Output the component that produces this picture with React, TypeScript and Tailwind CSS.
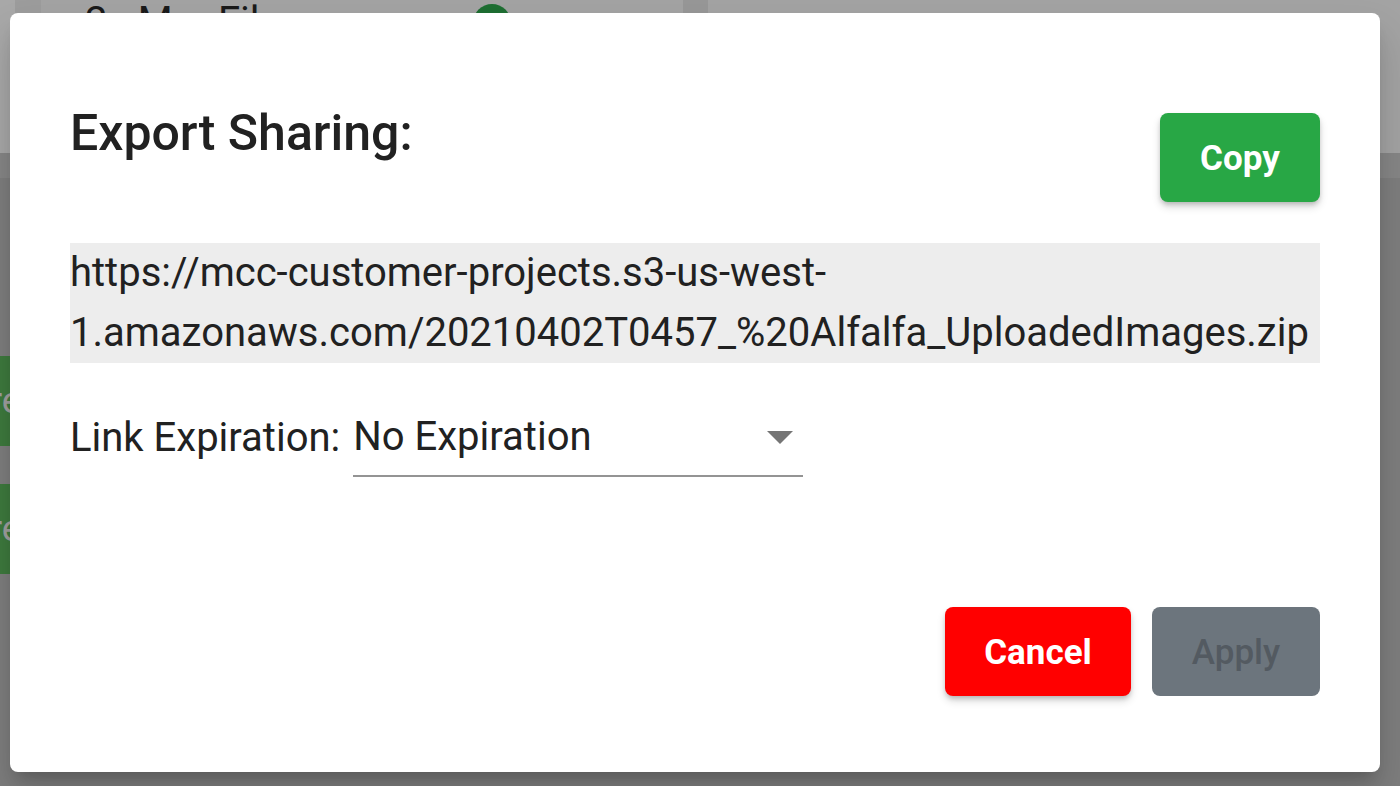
import React from 'react'

const url =
  'https://mcc-customer-projects.s3-us-west-1.amazonaws.com/20210402T0457_%20Alfalfa_UploadedImages.zip'

function DropArrow() {
  return (
    <svg width="26" height="13" viewBox="0 0 10 5" className="shrink-0">
      <path d="M0 0l5 5 5-5z" fill="#757575" />
    </svg>
  )
}

function Backdrop() {
  // the page behind the dialog, already dimmed by the overlay
  return (
    <div className="h-[786px] w-[1400px] overflow-hidden bg-[#7e7e7e]">
      <div className="flex h-[153px] bg-[#a3a3a3]">
        <div className="w-[15px] bg-[#a8a8a8]" />
        <div className="w-[26px] bg-[#9c9c9c]" />
        <div className="relative w-[642px] bg-[#a3a3a3]">
          <span className="absolute left-[44px] top-[2px] text-[40px] leading-none text-[#1a1a1a] font-['Roboto',sans-serif]">
            2 · Mar Files
          </span>
          <span className="absolute left-[432px] top-[4px] h-[38px] w-[38px] rounded-full bg-[#1e6e32]" />
        </div>
        <div className="w-[25px] bg-[#979797]" />
        <div className="flex-1 bg-[#a3a3a3]" />
      </div>
      <div className="h-[25px] bg-[#868686]" />
      <div className="flex flex-col gap-[38px] pt-[178px]">
        <div className="flex h-[90px] w-[12px] items-center overflow-hidden bg-[#3e7a3e] text-[36px] text-[#a0a0a0] font-['Roboto',sans-serif]">
          <span className="-ml-[10px]">re</span>
        </div>
        <div className="flex h-[90px] w-[12px] items-center overflow-hidden bg-[#3e7a3e] text-[36px] text-[#a0a0a0] font-['Roboto',sans-serif]">
          <span className="-ml-[10px]">re</span>
        </div>
      </div>
    </div>
  )
}

export default function App() {
  return (
    <div className="relative h-[786px] w-[1400px] overflow-hidden font-['Roboto',sans-serif]">
      <Backdrop />

      <div className="absolute left-[10px] top-[13px] flex h-[759px] w-[1370px] flex-col rounded-[8px] bg-white px-[60px] shadow-[0_11px_15px_-7px_rgba(0,0,0,0.2),0_24px_38px_3px_rgba(0,0,0,0.14)]">
        <div className="flex items-start justify-between pt-[92px]">
          <h2 className="text-[50px] font-medium leading-[56px] text-[#212121]">Export Sharing:</h2>
          <button className="mt-[8px] h-[89px] w-[160px] rounded-[8px] bg-[#28a745] pt-[3px] text-[35px] font-bold text-white shadow-[0_3px_5px_-1px_rgba(0,0,0,0.2),0_5px_8px_0_rgba(0,0,0,0.14)]">
            Copy
          </button>
        </div>

        <div className="mt-[41px] bg-[#ededed] text-[40px] leading-[60px] text-[#212121]">
          {url}
        </div>

        <div className="mt-[44px] flex items-center gap-[13px] text-[40px] text-[#212121]">
          <span className="pb-[8px]">Link Expiration:</span>
          <div className="flex h-[70px] w-[450px] items-center justify-between border-b-2 border-[#949494] pb-[8px] pr-[10px]">
            <span>No Expiration</span>
            <DropArrow />
          </div>
        </div>

        <div className="mt-auto flex justify-end gap-[21px] pb-[76px]">
          <button className="h-[89px] w-[186px] rounded-[8px] bg-[#ff0000] pt-[3px] text-[35px] font-bold text-white shadow-[0_3px_5px_-1px_rgba(0,0,0,0.2),0_5px_8px_0_rgba(0,0,0,0.14)]">
            Cancel
          </button>
          <button className="h-[89px] w-[168px] rounded-[8px] bg-[#6c757d] pt-[3px] text-[35px] font-medium text-[#535a61]">
            Apply
          </button>
        </div>
      </div>
    </div>
  )
}
